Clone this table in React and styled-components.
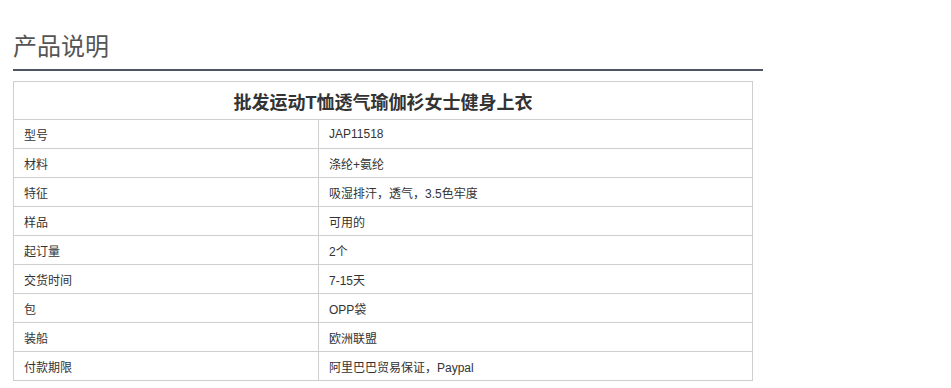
import React from "react";
import styled, { createGlobalStyle } from "styled-components";

const GlobalStyle = createGlobalStyle`
  body {
    margin: 0;
    background: #ffffff;
    font-family: "Liberation Sans", Arial, "Noto Sans CJK SC", sans-serif;
  }
`;

const Wrapper = styled.div`
  padding: 0 0 0 13px;
  width: 750px;
`;

const Heading = styled.h2`
  margin: 0;
  padding-top: 31px;
  font-size: 24px;
  line-height: 32px;
  font-weight: normal;
  color: #555;
  border-bottom: 2px solid #4e5663;
  padding-bottom: 6px;
`;

const Table = styled.table`
  margin-top: 10px;
  width: 740px;
  border-collapse: collapse;
  font-size: 12px;
  color: #333;
`;

const TitleCell = styled.th`
  height: 37px;
  padding: 0;
  border: 1px solid #cfcfcf;
  font-size: 18px;
  font-weight: bold;
  color: #333;
  text-align: center;
`;

const Cell = styled.td`
  height: 28px;
  padding: 0 10px;
  border: 1px solid #cfcfcf;
  width: ${(p) => (p.$label ? "284px" : "auto")};
  color: #333;
`;

const rows = [
  ["型号", "JAP11518"],
  ["材料", "涤纶+氨纶"],
  ["特征", "吸湿排汗，透气，3.5色牢度"],
  ["样品", "可用的"],
  ["起订量", "2个"],
  ["交货时间", "7-15天"],
  ["包", "OPP袋"],
  ["装船", "欧洲联盟"],
  ["付款期限", "阿里巴巴贸易保证，Paypal"],
];

export default function App() {
  return (
    <Wrapper>
      <GlobalStyle />
      <Heading>产品说明</Heading>
      <Table>
        <thead>
          <tr>
            <TitleCell colSpan={2}>批发运动T恤透气瑜伽衫女士健身上衣</TitleCell>
          </tr>
        </thead>
        <tbody>
          {rows.map(([k, v]) => (
            <tr key={k}>
              <Cell $label>{k}</Cell>
              <Cell>{v}</Cell>
            </tr>
          ))}
        </tbody>
      </Table>
    </Wrapper>
  );
}
